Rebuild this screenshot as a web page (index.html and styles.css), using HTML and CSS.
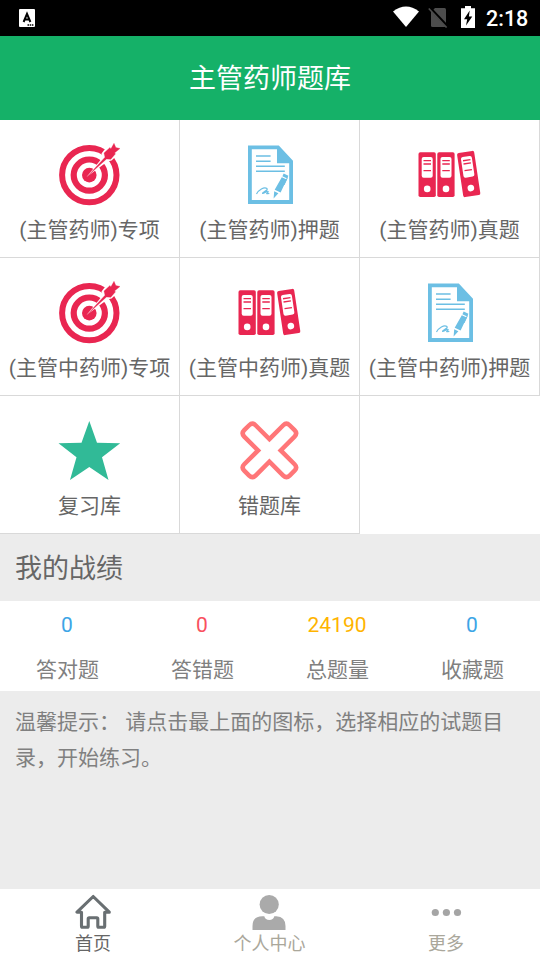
FILE: index.html
```html
<!DOCTYPE html>
<html lang="zh-CN">
<head>
<meta charset="utf-8">
<title>主管药师题库</title>
<link rel="stylesheet" href="styles.css">
</head>
<body>
<svg class="defs" aria-hidden="true">
  <defs>
    <symbol id="target" viewBox="57 22 66 66">
      <g fill="none" stroke="#e92651">
        <circle cx="89.3" cy="55.1" r="27.2" stroke-width="6"/>
        <circle cx="89.3" cy="55.1" r="15.600" stroke-width="6.200"/>
      </g>
      <circle cx="89.3" cy="55.1" r="7.3" fill="#e92651"/>
      <path d="M86.500 57 103 37l-1.500-3.500L112 20l12 9-12.500 11.500-4 1z" fill="#fff"/>
      <path d="M87.700 56 105 37.200l-1-4.200 6-5.500.8 1.500 3.200-5.700 1.800 4.200 4.200 1-5.500 4.500 1 .8-4.700 5.500-4.300-.3z" fill="#e92651" stroke="#e92651" stroke-width=".3"/>
    </symbol>
    <symbol id="paper" viewBox="57 22 66 66">
      <path d="M68 25.600h30.800L113 40.800V84H68zM71.800 29.200v50.800h37.400V43.200H97V29.200z" fill="#6cbfe4" fill-rule="evenodd"/>
      <path d="M76 36h14.600M76 41.200h14.600M76 46.300h28.800M76 51.300h28.800" stroke="#6cbfe4" stroke-width="1.600"/>
      <path d="M76.500 74c2-4 7.500-7.500 10.500-5.500 1.500 2-5 3.800-4.500 4.800.8.7 5-3 5.700-1.800.5 1-2.200 1.700-1.400 2.200.7.300 1.800-.7 2.500.1" fill="none" stroke="#6cbfe4" stroke-width="1.200"/>
      <path d="M103.700 53.500l4.700 2.200-1.300 2.800-4.700-2.200zM101.800 57.300l5 2.300-6.200 13-5.900-2.800zM94.200 71.200l4.200 2-4.800 5.200z" fill="#6cbfe4"/>
      <path d="M107.500 57.500l-3.500 7.500" stroke="#6cbfe4" fill="none"/>
    </symbol>
    <symbol id="binders" viewBox="57 22 66 66">
      <g id="binder">
        <rect x="58.500" y="32.300" width="17.300" height="44.700" rx="1.800" fill="#e92651"/>
        <rect x="61.700" y="37" width="11" height="20.800" rx="2" fill="#fff"/>
        <path d="M63.500 40.700h7.500M63.500 44h7.500M63.500 50.700h7.500" stroke="#e92651" stroke-width="1.300"/>
        <circle cx="67.200" cy="68.900" r="3.300" fill="#fff"/>
      </g>
      <use href="#binder" x="18.800"/>
      <use href="#binder" transform="translate(108.700 54) rotate(-8.500) translate(-67.150 -54.650)"/>
    </symbol>
    <symbol id="star" viewBox="57 22 66 66">
      <path d="M89.300 25 97 46.700 120.200 47.300 102 61.300 108.500 84 89.300 71 70 84 76.500 61.300 58.500 47.300 81.500 46.700z" fill="#31ba97"/>
    </symbol>
    <symbol id="cross" viewBox="57 22 66 66">
      <path transform="translate(89.400 54.400) rotate(45)" d="M-8-8V-27.600Q-8-32.100-3.500-32.100H3.500Q8-32.100 8-27.600V-8H27.600Q32.100-8 32.100-3.500V3.500Q32.100 8 27.600 8H8V27.600Q8 32.100 3.500 32.100H-3.500Q-8 32.100-8 27.600V8H-27.600Q-32.100 8-32.100 3.500V-3.500Q-32.100-8-27.600-8z" fill="none" stroke="#ff7678" stroke-width="4.500"/>
    </symbol>
  </defs>
</svg>

<div class="app">
  <div class="status">
    <svg class="status-app" viewBox="0 0 16 18"><rect width="16" height="18" rx="1" fill="#fff"/><path d="M4.600 13 8 4.800 11.400 13M5.800 10.400h4.400" fill="none" stroke="#000" stroke-width="2"/><path d="M8.500 16h6" stroke="#000" stroke-width="1.300" stroke-dasharray="1.500 .7"/></svg>
    <div class="status-right">
      <svg width="26" height="22" viewBox="0 0 26 22"><path d="M0 5.500Q13-4.300 26 5.500L13 21z" fill="#fff"/></svg>
      <svg class="sim" width="20" height="22" viewBox="0 0 20 22"><path d="M7 2h9.500q1.500 0 1.500 1.500V21H4.500Q3 21 3 19.500V6z" fill="#4d4d4d"/><path d="M1.500 1.500 19.500 20.700" stroke="#000" stroke-width="3"/><path d="M.8 2.500 18.600 21.500" stroke="#4d4d4d" stroke-width="1.600"/></svg>
      <svg class="battery" width="14" height="22" viewBox="0 0 14 22"><path d="M0 2.300h4V0h6v2.300h4V22H0z" fill="#fff"/><path d="M8.700 4.500 3 13.200h3.200L5 19.500l6.300-9H7.900z" fill="#000"/></svg>
      <span class="clock">2:18</span>
    </div>
  </div>

  <header class="header">主管药师题库</header>

  <main class="main">
    <section class="grid">
      <div class="cell"><svg class="icon"><use href="#target"/></svg><span>(主管药师)专项</span></div>
      <div class="cell"><svg class="icon"><use href="#paper"/></svg><span>(主管药师)押题</span></div>
      <div class="cell"><svg class="icon"><use href="#binders"/></svg><span>(主管药师)真题</span></div>
      <div class="cell"><svg class="icon"><use href="#target"/></svg><span>(主管中药师)专项</span></div>
      <div class="cell"><svg class="icon"><use href="#binders"/></svg><span>(主管中药师)真题</span></div>
      <div class="cell"><svg class="icon"><use href="#paper"/></svg><span>(主管中药师)押题</span></div>
      <div class="cell"><svg class="icon"><use href="#star"/></svg><span>复习库</span></div>
      <div class="cell"><svg class="icon"><use href="#cross"/></svg><span>错题库</span></div>
    </section>

    <h2 class="title">我的战绩</h2>
    <section class="stats">
      <div class="stat"><b class="blue">0</b><span>答对题</span></div>
      <div class="stat"><b class="red">0</b><span>答错题</span></div>
      <div class="stat"><b class="amber">24190</b><span>总题量</span></div>
      <div class="stat"><b class="blue">0</b><span>收藏题</span></div>
    </section>
    <p class="tip">温馨提示： 请点击最上面的图标，选择相应的试题目录，开始练习。</p>
  </main>

  <nav class="nav">
    <a class="tab active"><svg width="36" height="36" viewBox="0 0 36 36"><path d="M18.200 2.500 2 18.200H6.500V32.300Q6.500 33.300 7.500 33.300H12.200Q13.200 33.300 13.200 32.300V24.800Q13.200 23.800 14.200 23.800H21.800Q22.800 23.800 22.800 24.800V32.300Q22.800 33.300 23.800 33.300H28.700Q29.700 33.300 29.700 32.300V18.200H34.300z" fill="none" stroke="#696f72" stroke-width="3.100" stroke-linejoin="round"/></svg><span>首页</span></a>
    <a class="tab"><svg width="36" height="36" viewBox="0 0 36 36"><circle cx="17.200" cy="10.500" r="9.600" fill="#aaa"/><path d="M.5 36V32Q.5 22.200 10.300 22.200H12.300Q13.300 26 17.300 26T22.300 22.200H24.300Q33.500 22.700 33.500 32V36z" fill="#aaa"/></svg><span>个人中心</span></a>
    <a class="tab"><svg width="36" height="36" viewBox="0 0 36 36"><g fill="#a5a5a5"><circle cx="7.300" cy="18.500" r="3.600"/><circle cx="18.400" cy="18.500" r="3.600"/><circle cx="29.500" cy="18.500" r="3.600"/></g></svg><span>更多</span></a>
  </nav>
</div>
</body>
</html>
```
FILE: styles.css
```css
* { box-sizing: border-box; }

body {
  margin: 0;
  font-family: Roboto, "Noto Sans CJK SC", sans-serif;
  color: #666;
  background: #ececec;
}

.defs { position: absolute; width: 0; height: 0; }

.app {
  display: flex;
  flex-direction: column;
  width: 540px;
  height: 960px;
  overflow: hidden;
}

.status {
  display: flex;
  justify-content: space-between;
  align-items: center;
  height: 36px;
  padding: 0 12px 0 19px;
  background: #000;
  color: #fff;
}

.status-app { width: 16px; height: 18px; }
.status-right { display: flex; align-items: center; height: 36px; }
.status-right svg { margin-bottom: 2px; }
.sim { margin-left: 9px; }
.battery { margin-left: 13px; }
.clock {
  width: 42px;
  margin-left: 11px;
  padding-top: 2px;
  font-size: 21.500px;
  font-weight: 500;
  line-height: 36px;
  white-space: nowrap;
}

.header {
  height: 84px;
  padding-top: 1px;
  line-height: 85px;
  background: #15b168;
  color: #fff;
  font-size: 27px;
  text-align: center;
}

.main { flex: 1; }

.grid {
  display: grid;
  grid-template-columns: repeat(3, 180px);
  grid-auto-rows: 138px;
  background: #fff;
}

.cell {
  display: flex;
  flex-direction: column;
  align-items: center;
  padding-top: 22px;
  border-right: 1px solid #d9d9d9;
  border-bottom: 1px solid #d9d9d9;
  font-size: 21px;
  line-height: 32px;
  white-space: nowrap;
}

.icon { width: 66px; height: 66px; margin-bottom: 6px; flex: none; }

.title {
  height: 67px;
  margin: 0;
  padding: 2px 0 0 15px;
  font-size: 27px;
  font-weight: 400;
  line-height: 67px;
}

.stats {
  display: grid;
  grid-template-columns: repeat(4, 1fr);
  height: 90px;
  padding-top: 2px;
  background: #fff;
}

.stat {
  display: flex;
  flex-direction: column;
  align-items: center;
  color: #808080;
  font-size: 21px;
  line-height: 45px;
}

.stat b { padding-right: 1px; font-weight: 400; }
.blue { color: #3da5e6; }
.red { color: #f9505e; }
.amber { color: #ffb400; }

.tip {
  margin: 0;
  padding: 13px 18px 0 15px;
  color: #808080;
  font-size: 21px;
  line-height: 36px;
}

.nav {
  display: flex;
  justify-content: space-between;
  height: 71px;
  padding: 5px 76px 0 75px;
  background: #fff;
}

.tab {
  display: flex;
  flex-direction: column;
  align-items: center;
  color: #aaa79b;
  font-size: 18px;
  line-height: 28px;
}

.active { color: #666; }
```
